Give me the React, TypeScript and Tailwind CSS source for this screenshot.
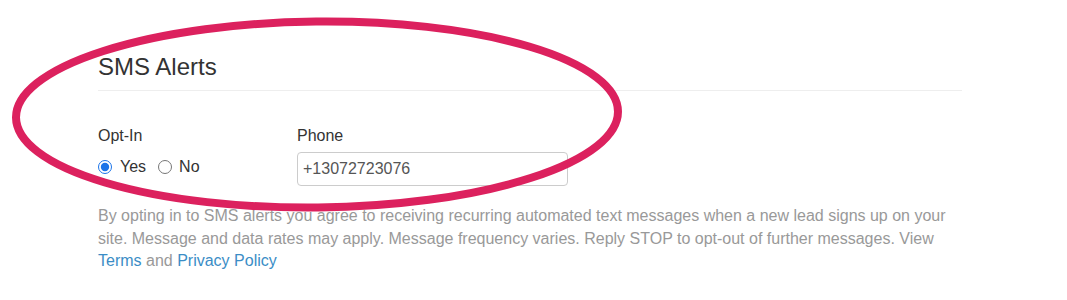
import React from "react";

export default function App() {
  return (
    <div className="relative w-[1067px] h-[300px] bg-white overflow-hidden" style={{ fontFamily: '"Liberation Sans", Arial, sans-serif' }}>
      <div className="pl-[98px] pt-[52px] w-[962px]">
        <h2 className="text-[24px] leading-[30px] text-[#333] pb-[8px] border-b border-[#eeeeee]">SMS Alerts</h2>
        <div className="flex mt-[35px]">
          <div className="w-[199px]">
            <div className="text-[16px] leading-[20px] text-[#333]">Opt-In</div>
            <div className="flex items-center mt-[9px] text-[16px] text-[#333]">
              <label className="flex items-center">
                <input type="radio" name="optin" defaultChecked className="w-[14px] h-[14px] m-0 accent-[#1a73e8]" />
                <span className="ml-[8px]">Yes</span>
              </label>
              <label className="flex items-center ml-[12px]">
                <input type="radio" name="optin" className="w-[14px] h-[14px] m-0" />
                <span className="ml-[7px]">No</span>
              </label>
            </div>
          </div>
          <div>
            <div className="text-[16px] leading-[20px] text-[#333]">Phone</div>
            <input
              type="text"
              defaultValue="+13072723076"
              className="mt-[6px] block w-[271px] h-[34px] border border-[#cccccc] rounded-[4px] px-[5px] text-[16px] text-[#555] outline-none"
            />
          </div>
        </div>
        <p className="mt-[19px] text-[16px] leading-[22.5px] text-[#999] w-[864px]">
          By opting in to SMS alerts you agree to receiving recurring automated text messages when a new lead signs up on your site. Message and data rates may apply. Message frequency varies. Reply STOP to opt-out of further messages. View{" "}
          <a className="text-[#3b8dc6]">Terms</a> and <a className="text-[#3b8dc6]">Privacy Policy</a>
        </p>
      </div>
      <svg className="absolute left-0 top-0 pointer-events-none" width="1067" height="300">
        <ellipse cx="317" cy="114.5" rx="301" ry="93" fill="none" stroke="#dc215e" strokeWidth="8" transform="rotate(-0.6 317 114.5)" />
      </svg>
    </div>
  );
}
